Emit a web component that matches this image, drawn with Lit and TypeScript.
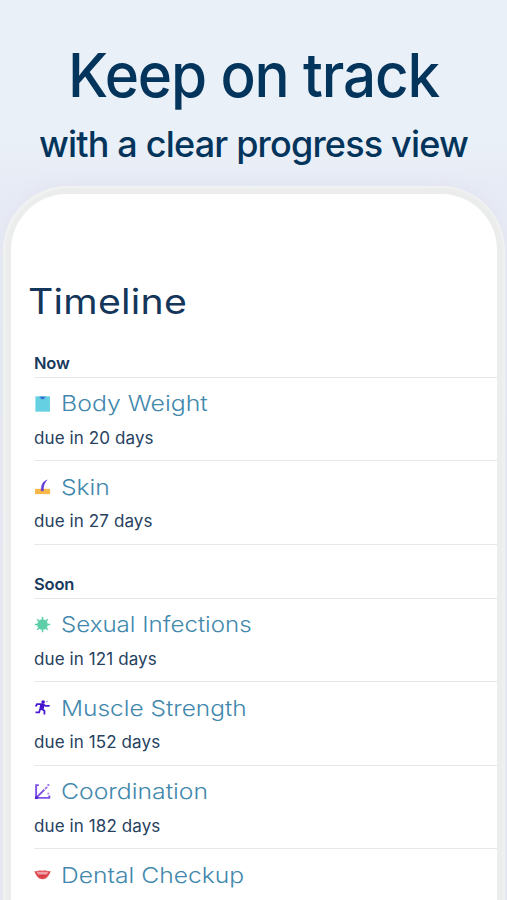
import { LitElement, html, svg, css, nothing } from "lit";
import { customElement } from "lit/decorators.js";

const icons: Record<string, unknown> = {
  scale: svg`<path d="M1.3 1.3H15v14.4H1.3z" fill="#65d0e2"/><path d="M4.8 1.3h6.6L9.4 4H6.6z" fill="#3c91dc"/><circle cx="8" cy="2.7" r="1" fill="#4655cc"/>`,
  skin: svg`<path d="M1 10.2h14.2v5H1z" fill="#f6b849"/><path d="M5.7 10.2h3.8l-.9 2.7H6.5z" fill="#e99a49"/><path d="M6.8 12.2C6.2 6.5 8 3 12.9 1.3 10.3 4.4 9.1 6.5 9 12.2z" fill="#6a40dc"/>`,
  virus: svg`<circle cx="8" cy="8" r="5" fill="#5fcfa9"/><path d="M8 .8v14.4M.8 8h14.4M3 3l10 10M13 3 3 13" stroke="#5fcfa9" stroke-width="1.4"/>`,
  runner: svg`<circle cx="8.6" cy="2.8" r="1.7" fill="#4512cc"/><path d="M1.600 7 2.800 4.900h5.700l2.300 1.600h3.900M7.7 5.2 6.500 9l3.300 2v3.700M6 9l-1.200 3.500H1.4" fill="none" stroke="#4a1cd0" stroke-width="1.7"/><path d="M5.800 4.600 10 5.400 8.900 10 5.200 9z" fill="#4512cc"/><path d="m11.500 2.800 1.700-1" stroke="#b79cf1"/>`,
  axes: svg`<path d="M4.600 2H2v12h12.400v-2.200M2 14l7.800-7.800" fill="none" stroke="#7f50e8" stroke-width="1.8"/><path d="M.9 12.600h2.700v2.500H.9z" fill="#5121ca"/><path d="M10.500 5.600 12.400 3.700M12.600 1.900h1.800M13.500 9.200v1.500" fill="none" stroke="#9c75ef" stroke-width="1.800"/>`,
  mouth: svg`<path d="M.3 5c2.6 0 5.1-1.2 7.7-.5C10.6 3.8 13.1 5 15.7 5 13.9 9.7 11.6 12.5 8 12.5S2.1 9.7.3 5z" fill="#e04951"/><path d="M2.4 5.5h11.2L12 8H4z" fill="#f0a0a5"/><path d="M4 8.5c2.6.7 5.4.7 8 0-2 1.700-6 1.700-8 0z" fill="#c52f3b"/>`,
};

interface Entry { icon: string; title: string; days?: number; cls: string; }

const groups: { label: string; entries: Entry[] }[] = [
  { label: "Now", entries: [
    { icon: "scale", title: "Body Weight", days: 20, cls: "weight" },
    { icon: "skin", title: "Skin", days: 27, cls: "skin" },
  ] },
  { label: "Soon", entries: [
    { icon: "virus", title: "Sexual Infections", days: 121, cls: "infections" },
    { icon: "runner", title: "Muscle Strength", days: 152, cls: "strength" },
    { icon: "axes", title: "Coordination", days: 182, cls: "coordination" },
    { icon: "mouth", title: "Dental Checkup", cls: "dental" },
  ] },
];

@customElement("app-root")
export class AppRoot extends LitElement {
  static styles = css`
    :host { display: block; height: 900px; overflow: hidden; font-family: Inter, sans-serif; color: #17395c; background: linear-gradient(#eaf0f8 0, #eaf0f8 140px, #e7ebf5 185px, #e7e9f4 100%); }
    * { box-sizing: border-box; }
    .page { height: 900px; display: flex; flex-direction: column; overflow: hidden; }
    header { height: 186px; flex: none; padding-top: 40px; color: #03345b; text-align: center; white-space: nowrap; }
    h1 { margin: 0; font-size: 61px; line-height: 70px; font-weight: 540; letter-spacing: -1.2px; transform: scaleX(.958); }
    .sub { margin: 12px 0 0; font-size: 36px; line-height: 44px; font-weight: 530; letter-spacing: -.82px; }
    .phone { flex: none; height: 800px; margin: 0 2px 0 3px; padding: 8px 8px 0; border-radius: 65px 65px 0 0; background: #ebecec; box-shadow: inset 2px 2px 2px #f1f2f2, inset -2px 0 2px #f1f2f2, 0 0 18px #e1e3f0; }
    .screen { height: 100%; border-radius: 56px 56px 0 0; background: #fff; overflow: hidden; padding: 85px 0 0 23px; }
    h2 { width: max-content; margin: 0 0 0 -6px; font-size: 35px; line-height: 44px; font-weight: 400; letter-spacing: .2px; color: #14365b; transform: scaleX(1.122); transform-origin: left; }
    section + section { margin-top: 26px; }
    h3 { margin: 0; height: 28px; font-size: 16.5px; line-height: 26px; font-weight: 600; letter-spacing: -.2px; border-bottom: 1px solid #e6e9eb; }
    .first { margin-top: 26.6px; }
    .row { height: 83.5px; padding-top: 9.6px; border-bottom: 1px solid #e6e9eb; white-space: nowrap; }
    .title { display: flex; align-items: center; height: 32px; gap: 10px; font-size: 22px; font-weight: 340; color: #4288ad; }
    .title span { transform: scaleX(1.12); transform-origin: left; }
    .title .weight { transform: scaleX(1.13); }
    .title .infections { transform: scaleX(1.095); }
    .title .strength { transform: scaleX(1.112); }
    .title .coordination { transform: scaleX(1.125); }
    .icon { width: 17px; height: 17px; flex: none; }
    .due { margin-top: 6.4px; font-size: 17px; line-height: 24px; letter-spacing: .1px; color: #26415e; }
  `;

  render() {
    return html`<div class="page">
      <header><h1>Keep on track</h1><p class="sub">with a clear progress view</p></header>
      <main class="phone"><div class="screen">
        <h2>Timeline</h2>
        ${groups.map((g, i) => html`<section class=${i === 0 ? "first" : "later"}>
          <h3>${g.label}</h3>
          ${g.entries.map((e) => html`<div class="row">
            <div class="title"><svg class="icon" viewBox="0 0 16 16">${icons[e.icon]}</svg><span class=${e.cls}>${e.title}</span></div>
            ${e.days === undefined ? nothing : html`<div class="due">due in ${e.days} days</div>`}
          </div>`)}
        </section>`)}
      </div></main>
    </div>`;
  }
}
